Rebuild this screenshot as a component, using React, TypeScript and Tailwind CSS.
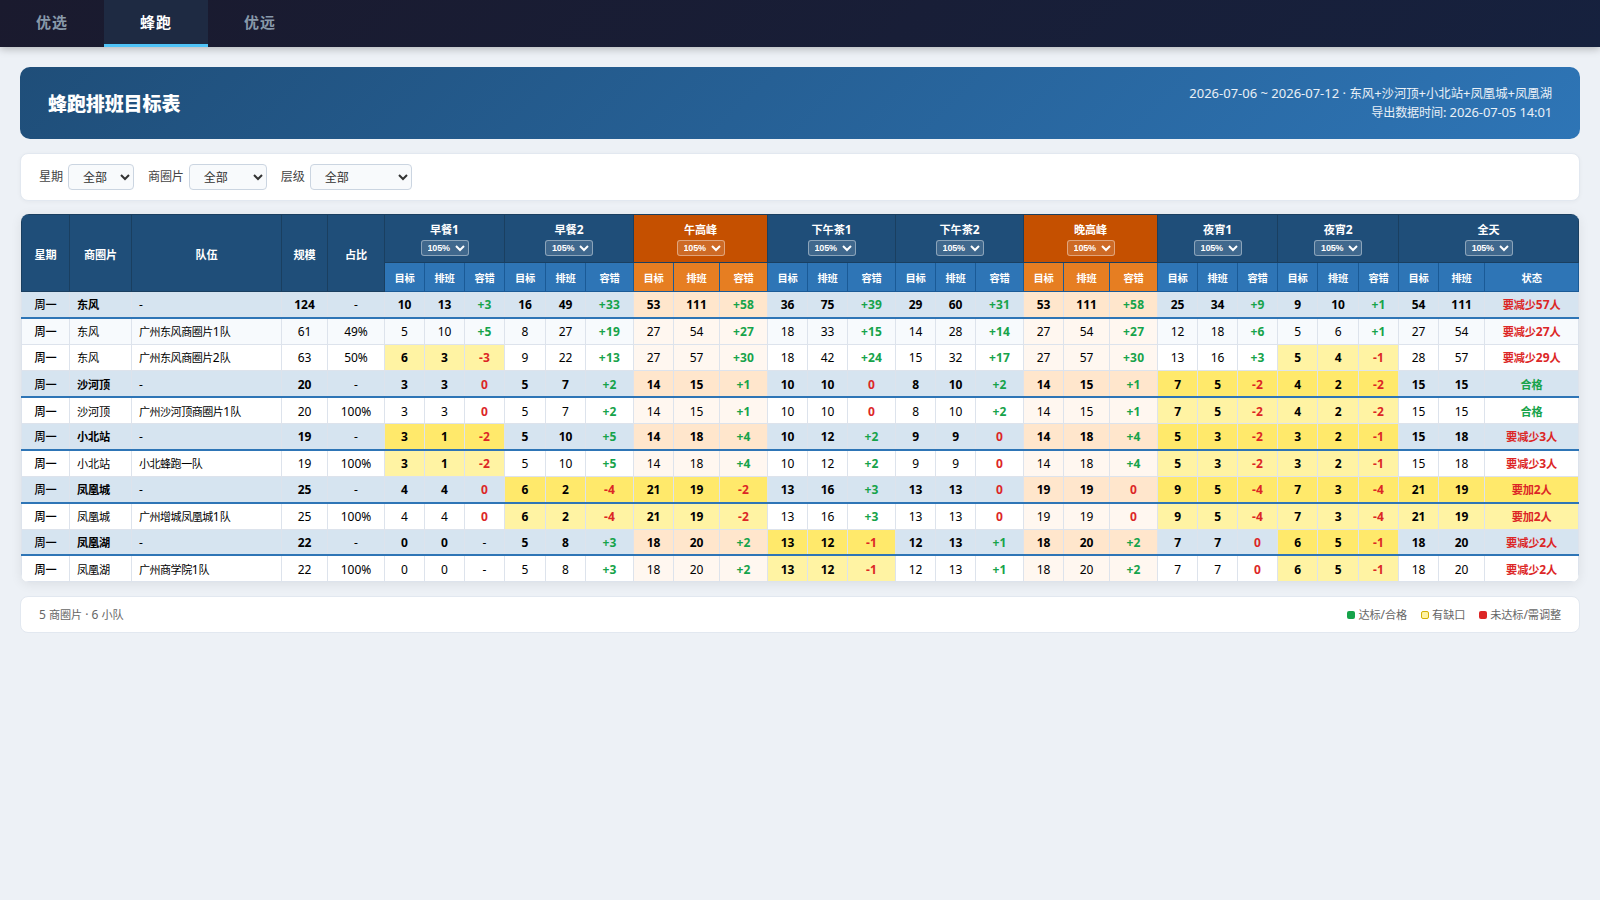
import { Fragment } from 'react';

type Tone = 'pos' | 'neg' | 'none';

const SLOTS = [
  { name: '早餐1', peak: false },
  { name: '早餐2', peak: false },
  { name: '午高峰', peak: true },
  { name: '下午茶1', peak: false },
  { name: '下午茶2', peak: false },
  { name: '晚高峰', peak: true },
  { name: '夜宵1', peak: false },
  { name: '夜宵2', peak: false },
];

const COLS = [
  48, 62, 150, 46, 57, 40, 40, 40, 41, 40, 48, 40, 46, 48, 40, 40, 48, 40, 40, 48, 40, 46, 48, 40, 40, 40, 40, 41, 40, 40,
  46, 94,
];

interface Row {
  area: string;
  team: string;
  size: number;
  share: string;
  cells: string;
  total: [number, number];
  status: string;
}

// cells: target/scheduled/tolerance for each slot, in slot order
const ROWS: Row[] = [
  { area: '东风', team: '-', size: 124, share: '-', cells: '10 13 +3 16 49 +33 53 111 +58 36 75 +39 29 60 +31 53 111 +58 25 34 +9 9 10 +1', total: [54, 111], status: '要减少57人' },
  { area: '东风', team: '广州东风商圈片1队', size: 61, share: '49%', cells: '5 10 +5 8 27 +19 27 54 +27 18 33 +15 14 28 +14 27 54 +27 12 18 +6 5 6 +1', total: [27, 54], status: '要减少27人' },
  { area: '东风', team: '广州东风商圈片2队', size: 63, share: '50%', cells: '6 3 -3 9 22 +13 27 57 +30 18 42 +24 15 32 +17 27 57 +30 13 16 +3 5 4 -1', total: [28, 57], status: '要减少29人' },
  { area: '沙河顶', team: '-', size: 20, share: '-', cells: '3 3 0 5 7 +2 14 15 +1 10 10 0 8 10 +2 14 15 +1 7 5 -2 4 2 -2', total: [15, 15], status: '合格' },
  { area: '沙河顶', team: '广州沙河顶商圈片1队', size: 20, share: '100%', cells: '3 3 0 5 7 +2 14 15 +1 10 10 0 8 10 +2 14 15 +1 7 5 -2 4 2 -2', total: [15, 15], status: '合格' },
  { area: '小北站', team: '-', size: 19, share: '-', cells: '3 1 -2 5 10 +5 14 18 +4 10 12 +2 9 9 0 14 18 +4 5 3 -2 3 2 -1', total: [15, 18], status: '要减少3人' },
  { area: '小北站', team: '小北蜂跑一队', size: 19, share: '100%', cells: '3 1 -2 5 10 +5 14 18 +4 10 12 +2 9 9 0 14 18 +4 5 3 -2 3 2 -1', total: [15, 18], status: '要减少3人' },
  { area: '凤凰城', team: '-', size: 25, share: '-', cells: '4 4 0 6 2 -4 21 19 -2 13 16 +3 13 13 0 19 19 0 9 5 -4 7 3 -4', total: [21, 19], status: '要加2人' },
  { area: '凤凰城', team: '广州增城凤凰城1队', size: 25, share: '100%', cells: '4 4 0 6 2 -4 21 19 -2 13 16 +3 13 13 0 19 19 0 9 5 -4 7 3 -4', total: [21, 19], status: '要加2人' },
  { area: '凤凰湖', team: '-', size: 22, share: '-', cells: '0 0 - 5 8 +3 18 20 +2 13 12 -1 12 13 +1 18 20 +2 7 7 0 6 5 -1', total: [18, 20], status: '要减少2人' },
  { area: '凤凰湖', team: '广州商学院1队', size: 22, share: '100%', cells: '0 0 - 5 8 +3 18 20 +2 13 12 -1 12 13 +1 18 20 +2 7 7 0 6 5 -1', total: [18, 20], status: '要减少2人' },
];

const toneOf = (v: string): Tone => (v.startsWith('+') ? 'pos' : v === '-' ? 'none' : 'neg');
const TONE = { pos: 'text-[#16a34a] font-bold', neg: 'text-[#dc2626] font-bold', none: 'font-normal' };

/** Sets Han runs slightly smaller than the Latin text around them. */
function Zh({ children, han = 'text-[0.93em] tracking-[-0.01em]' }: { children: string; han?: string }) {
  return (
    <>
      {children.split(/([\u4e00-\u9fff]+)/).map((part, i) =>
        i % 2 ? (
          <span key={i} className={han}>
            {part}
          </span>
        ) : (
          <Fragment key={i}>{part}</Fragment>
        ),
      )}
    </>
  );
}

function Filter({ label, width }: { label: string; width: string }) {
  return (
    <label className="flex items-center gap-[5px] text-[13px] text-[#444]">
      <span>
        <Zh>{label}</Zh>
      </span>
      <select
        className={`${width} h-[26px] rounded-[4px] border border-[#cbd5e1] bg-[#f8fafc] px-[10px] text-[12px] text-[#333]`}
      >
        <option>全部</option>
      </select>
    </label>
  );
}

function Rate() {
  return (
    <select className="mx-auto mt-[2px] block h-4 w-12 rounded-[3px] border border-white/40 bg-white/15 pl-[2px] font-['Liberation_Sans',sans-serif] text-[9px] leading-[14px] font-bold tracking-[-0.02em] text-white">
      <option>105%</option>
    </select>
  );
}

function SlotHead({ name, peak }: { name: string; peak: boolean }) {
  return (
    <th colSpan={3} className={`h-12 border border-[#1a3f60] p-0 ${peak ? 'bg-[#c55000]' : 'bg-[#1f4e79]'}`}>
      <div className="leading-[17px]">
        <Zh>{name}</Zh>
      </div>
      <Rate />
    </th>
  );
}

function SubHead({ text, peak }: { text: string; peak: boolean }) {
  return (
    <th className={`h-[29px] border border-[#1a5a96] p-0 pt-px text-[11px] ${peak ? 'bg-[#e67e22]' : 'bg-[#2e75b6]'}`}>
      <Zh>{text}</Zh>
    </th>
  );
}

function BodyRow({ row, index }: { row: Row; index: number }) {
  const summary = row.team === '-';
  const values = row.cells.split(' ');
  const edge = summary
    ? 'border border-[#dde3ec] border-b-2 border-b-[#2e75b6] pt-[2px]'
    : 'border border-[#dde3ec] pt-[2px]';
  const base = summary ? 'bg-[#d6e4f0]' : index === 1 ? 'bg-[#f7fafd]' : 'bg-white';
  const peakBg = summary ? 'bg-[#ffe6cc]' : 'bg-[#fff7f0]';
  const gapBg = summary ? 'bg-[#ffe96b] font-bold' : 'bg-[#fff3a3] font-bold';
  const totalGap = row.total[1] < row.total[0];
  const totalBg = totalGap ? gapBg : base;
  return (
    <tr className={`h-[26.4px] ${summary ? 'font-bold' : 'font-normal'}`}>
      <td className={`${edge} ${base} font-medium`}>
        <Zh>周一</Zh>
      </td>
      <td className={`${edge} ${base} pl-[7px] text-left`}>
        <Zh>{row.area}</Zh>
      </td>
      <td className={`${edge} ${base} pl-[7px] text-left font-normal`}>
        <Zh han="text-[0.92em] tracking-[-0.045em]">{row.team}</Zh>
      </td>
      <td className={`${edge} ${base}`}>{row.size}</td>
      <td className={`${edge} ${base} font-normal`}>{row.share}</td>
      {SLOTS.map((slot, s) => {
        const trio = values.slice(s * 3, s * 3 + 3);
        const short = Number(trio[1]) < Number(trio[0]);
        const bg = short ? gapBg : slot.peak ? peakBg : base;
        return (
          <Fragment key={slot.name}>
            <td className={`${edge} ${bg}`}>{trio[0]}</td>
            <td className={`${edge} ${bg}`}>{trio[1]}</td>
            <td className={`${edge} ${bg} ${TONE[toneOf(trio[2])]} tracking-[0.02em]`}>{trio[2]}</td>
          </Fragment>
        );
      })}
      <td className={`${edge} ${totalBg}`}>{row.total[0]}</td>
      <td className={`${edge} ${totalBg}`}>{row.total[1]}</td>
      <td className={`${edge} ${totalBg} font-bold ${row.status === '合格' ? 'text-[#16a34a]' : 'text-[#dc2626]'}`}>
        <Zh>{row.status}</Zh>
      </td>
    </tr>
  );
}

export default function App() {
  return (
    <div className="min-h-screen bg-[#edf1f6] font-['Noto_Sans','Noto_Sans_CJK_SC',sans-serif] text-black">
      <nav className="flex h-[47px] bg-linear-135 from-[#1a1a2e] to-[#16213e] text-[15px] font-bold tracking-[1px] text-[#8899aa] shadow-[0_2px_8px_rgba(0,0,0,0.25)]">
        <div className="flex w-[104px] items-center justify-center pb-[2px]">优选</div>
        <div className="flex w-[104px] items-center justify-center border-b-[3px] border-[#4fc3f7] bg-[#1e2a42] text-white">
          蜂跑
        </div>
        <div className="flex w-[104px] items-center justify-center pb-[2px]">优远</div>
      </nav>

      <main className="px-5 pt-5">
        <header className="flex h-[72px] items-center justify-between rounded-[10px] bg-linear-135 from-[#1f4e79] to-[#2e75b6] px-7 text-white">
          <h1 className="pt-[2px] text-[19px] font-black tracking-[-0.1px]">蜂跑排班目标表</h1>
          <div className="text-right text-[13px] leading-[18px] text-white/90">
            <p>
              <Zh han="text-[0.95em]">2026-07-06 ~ 2026-07-12 · 东风+沙河顶+小北站+凤凰城+凤凰湖</Zh>
            </p>
            <p className="tracking-[-0.01em]">
              <Zh>导出数据时间: 2026-07-05 14:01</Zh>
            </p>
          </div>
        </header>

        <section className="mt-[14px] flex h-[48px] items-center gap-[14px] rounded-lg border border-[#e2e8f0] bg-white px-[18px] shadow-[0_1px_4px_rgba(0,0,0,0.04)]">
          <Filter label="星期" width="w-[66px]" />
          <Filter label="商圈片" width="w-[78px]" />
          <Filter label="层级" width="w-[102px]" />
        </section>

        <section className="mx-px mt-[13px] overflow-hidden rounded-lg bg-white shadow-[0_2px_12px_rgba(0,0,0,0.08)]">
          <table className="w-[1558px] table-fixed border-collapse text-center text-[12px] leading-[16px]">
            <colgroup>
              {COLS.map((w, i) => (
                <col key={i} style={{ width: w }} />
              ))}
            </colgroup>
            <thead className="text-[12px] text-white">
              <tr>
                {['星期', '商圈片', '队伍', '规模', '占比'].map((t) => (
                  <th key={t} rowSpan={2} className="border border-[#1a3f60] bg-[#1f4e79] p-0 pt-[3px]">
                    <Zh>{t}</Zh>
                  </th>
                ))}
                {SLOTS.map((s) => (
                  <SlotHead key={s.name} {...s} />
                ))}
                <SlotHead name="全天" peak={false} />
              </tr>
              <tr>
                {SLOTS.map((s) => (
                  <Fragment key={s.name}>
                    <SubHead text="目标" peak={s.peak} />
                    <SubHead text="排班" peak={s.peak} />
                    <SubHead text="容错" peak={s.peak} />
                  </Fragment>
                ))}
                <SubHead text="目标" peak={false} />
                <SubHead text="排班" peak={false} />
                <SubHead text="状态" peak={false} />
              </tr>
            </thead>
            <tbody>
              {ROWS.map((r, i) => (
                <BodyRow key={i} row={r} index={i} />
              ))}
            </tbody>
          </table>
        </section>

        <footer className="mt-[14px] flex h-[37px] items-center justify-between rounded-lg border border-[#e2e8f0] bg-white px-[18px] text-[12px] text-[#666]">
          <span>
            <Zh>5 商圈片 · 6 小队</Zh>
          </span>
          <div className="flex gap-[14px]">
            <span className="flex items-center gap-[3px]">
              <i className="size-2 rounded-[2px] bg-[#16a34a]" />
              <span>
                <Zh>达标/合格</Zh>
              </span>
            </span>
            <span className="flex items-center gap-[3px]">
              <i className="size-2 rounded-[2px] border border-[#d4b106] bg-[#fff3a3]" />
              <span>
                <Zh>有缺口</Zh>
              </span>
            </span>
            <span className="flex items-center gap-[3px]">
              <i className="size-2 rounded-[2px] bg-[#dc2626]" />
              <span>
                <Zh>未达标/需调整</Zh>
              </span>
            </span>
          </div>
        </footer>
      </main>
    </div>
  );
}
